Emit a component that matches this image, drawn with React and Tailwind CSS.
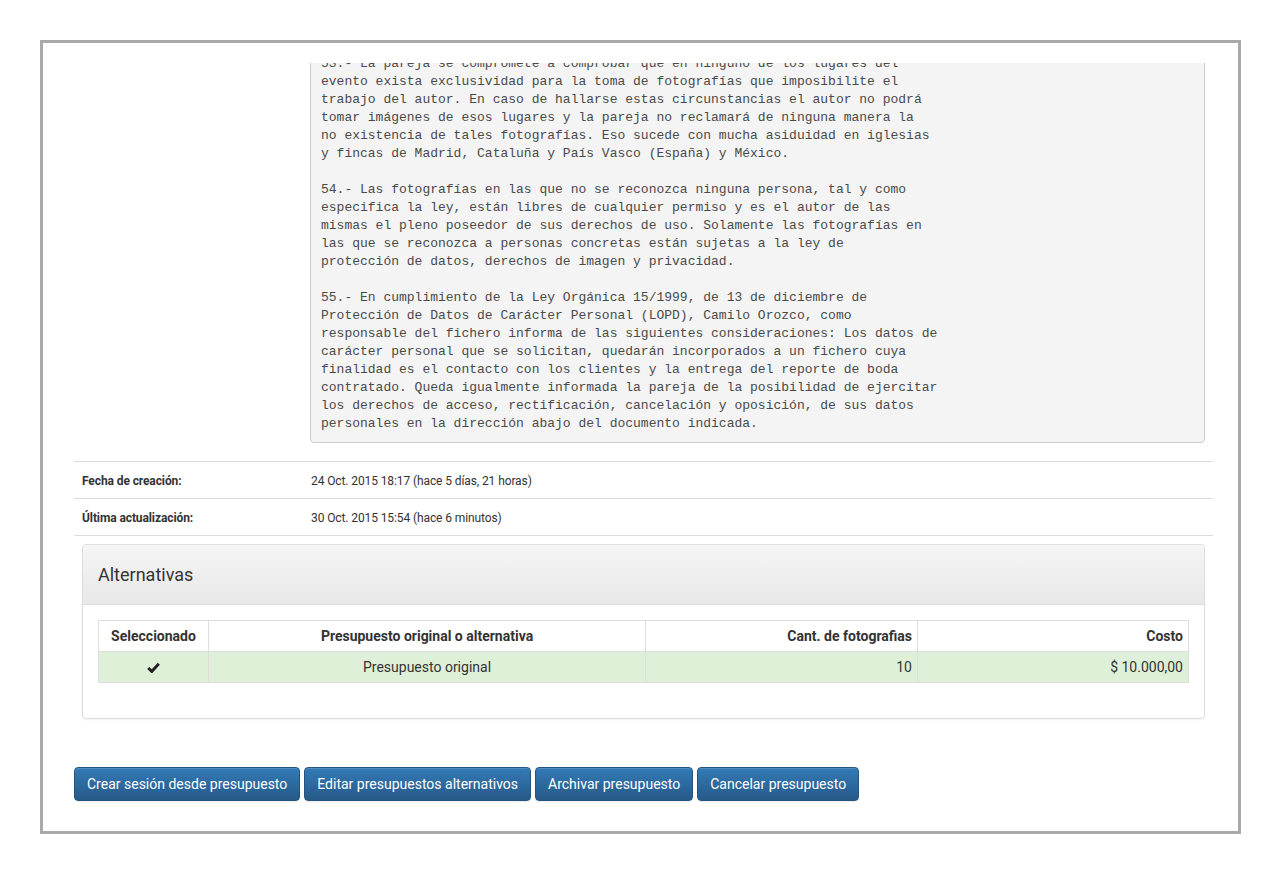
import React from "react";

const preLines = [
  "53.- La pareja se compromete a comprobar que en ninguno de los lugares del",
  "evento exista exclusividad para la toma de fotografías que imposibilite el",
  "trabajo del autor. En caso de hallarse estas circunstancias el autor no podrá",
  "tomar imágenes de esos lugares y la pareja no reclamará de ninguna manera la",
  "no existencia de tales fotografías. Eso sucede con mucha asiduidad en iglesias",
  "y fincas de Madrid, Cataluña y País Vasco (España) y México.",
  "",
  "54.- Las fotografías en las que no se reconozca ninguna persona, tal y como",
  "especifica la ley, están libres de cualquier permiso y es el autor de las",
  "mismas el pleno poseedor de sus derechos de uso. Solamente las fotografías en",
  "las que se reconozca a personas concretas están sujetas a la ley de",
  "protección de datos, derechos de imagen y privacidad.",
  "",
  "55.- En cumplimiento de la Ley Orgánica 15/1999, de 13 de diciembre de",
  "Protección de Datos de Carácter Personal (LOPD), Camilo Orozco, como",
  "responsable del fichero informa de las siguientes consideraciones: Los datos de",
  "carácter personal que se solicitan, quedarán incorporados a un fichero cuya",
  "finalidad es el contacto con los clientes y la entrega del reporte de boda",
  "contratado. Queda igualmente informada la pareja de la posibilidad de ejercitar",
  "los derechos de acceso, rectificación, cancelación y oposición, de sus datos",
  "personales en la dirección abajo del documento indicada.",
];

function Btn({ children }) {
  return (
    <button className="h-[34px] px-[12px] rounded-[4px] border border-[#245580] bg-gradient-to-b from-[#337ab7] to-[#265a88] text-white text-[14px] leading-none whitespace-nowrap shadow-[inset_0_1px_0_rgba(255,255,255,0.15),0_1px_1px_rgba(0,0,0,0.075)]">
      {children}
    </button>
  );
}

export default function App() {
  return (
    <div className="bg-white w-[1281px] h-[874px] pt-[40px] pl-[40px]" style={{ fontFamily: "Roboto, 'Liberation Sans', sans-serif" }}>
      <div className="w-[1201px] h-[794px] border-[3px] border-[#a9a9a9] pl-[31px] pr-[25px] pt-[20px] text-[#333] overflow-hidden">
        {/* pre region (scrolled) */}
        <div className="overflow-hidden">
          <div className="pl-[236px] pr-[8px] mt-[-18px]">
            <pre
              className="bg-[#f4f4f4] border border-[#ccc] rounded-[4px] pt-[9px] pb-[9px] px-[10px] text-[13px] leading-[18px] text-[#4a4a4a] m-0"
              style={{ fontFamily: "'Liberation Mono', 'Courier New', monospace" }}
            >
              {preLines.join("\n")}
            </pre>
          </div>
        </div>

        {/* info rows */}
        <div className="mt-[18px]">
          <div className="flex items-center h-[37px] pt-[2px] border-t border-[#ddd] text-[12px]">
            <div className="w-[237px] pl-[8px] font-bold tracking-[-0.1px]">Fecha de creación:</div>
            <div className="tracking-[-0.1px]">24 Oct. 2015 18:17 (hace 5 días, 21 horas)</div>
          </div>
          <div className="flex items-center h-[37px] pt-[2px] border-t border-[#ddd] text-[12px]">
            <div className="w-[237px] pl-[8px] font-bold tracking-[-0.1px]">Última actualización:</div>
            <div className="tracking-[-0.1px]">30 Oct. 2015 15:54 (hace 6 minutos)</div>
          </div>
          <div className="border-t border-[#ddd]"></div>
        </div>

        {/* panel */}
        <div className="mx-[8px] mt-[8px] border border-[#ddd] rounded-[4px] shadow-[0_1px_2px_rgba(0,0,0,0.05)] overflow-hidden">
          <div className="h-[60px] flex items-center px-[15px] bg-gradient-to-b from-[#f5f5f5] to-[#e8e8e8] border-b border-[#ddd]">
            <span className="text-[18px]">Alternativas</span>
          </div>
          <div className="pt-[15px] px-[15px] pb-[35px]">
            <table className="w-full border-collapse text-[14px]">
              <thead>
                <tr className="h-[31px]">
                  <th className="w-[110px] border border-[#ddd] px-[5px] font-bold text-center">Seleccionado</th>
                  <th className="w-[437px] border border-[#ddd] px-[5px] font-bold text-center">Presupuesto original o alternativa</th>
                  <th className="w-[272px] border border-[#ddd] px-[5px] font-bold text-right">Cant. de fotografias</th>
                  <th className="border border-[#ddd] px-[5px] font-bold text-right">Costo</th>
                </tr>
              </thead>
              <tbody>
                <tr className="h-[31px] bg-[#dff0d8]">
                  <td className="border border-[#ddd] px-[5px] text-center">
                    <svg width="13" height="11" viewBox="0 0 13 11" className="inline-block align-middle">
                      <path d="M1.2 6 L4.8 9.4 L11.8 1.8" fill="none" stroke="#222" strokeWidth="3" strokeLinecap="butt" strokeLinejoin="miter" />
                    </svg>
                  </td>
                  <td className="border border-[#ddd] px-[5px] text-center">Presupuesto original</td>
                  <td className="border border-[#ddd] px-[5px] text-right">10</td>
                  <td className="border border-[#ddd] px-[5px] text-right">$ 10.000,00</td>
                </tr>
              </tbody>
            </table>
          </div>
        </div>

        {/* buttons */}
        <div className="flex gap-[4px] mt-[48px]">
          <Btn>Crear sesión desde presupuesto</Btn>
          <Btn>Editar presupuestos alternativos</Btn>
          <Btn>Archivar presupuesto</Btn>
          <Btn>Cancelar presupuesto</Btn>
        </div>
      </div>
    </div>
  );
}
